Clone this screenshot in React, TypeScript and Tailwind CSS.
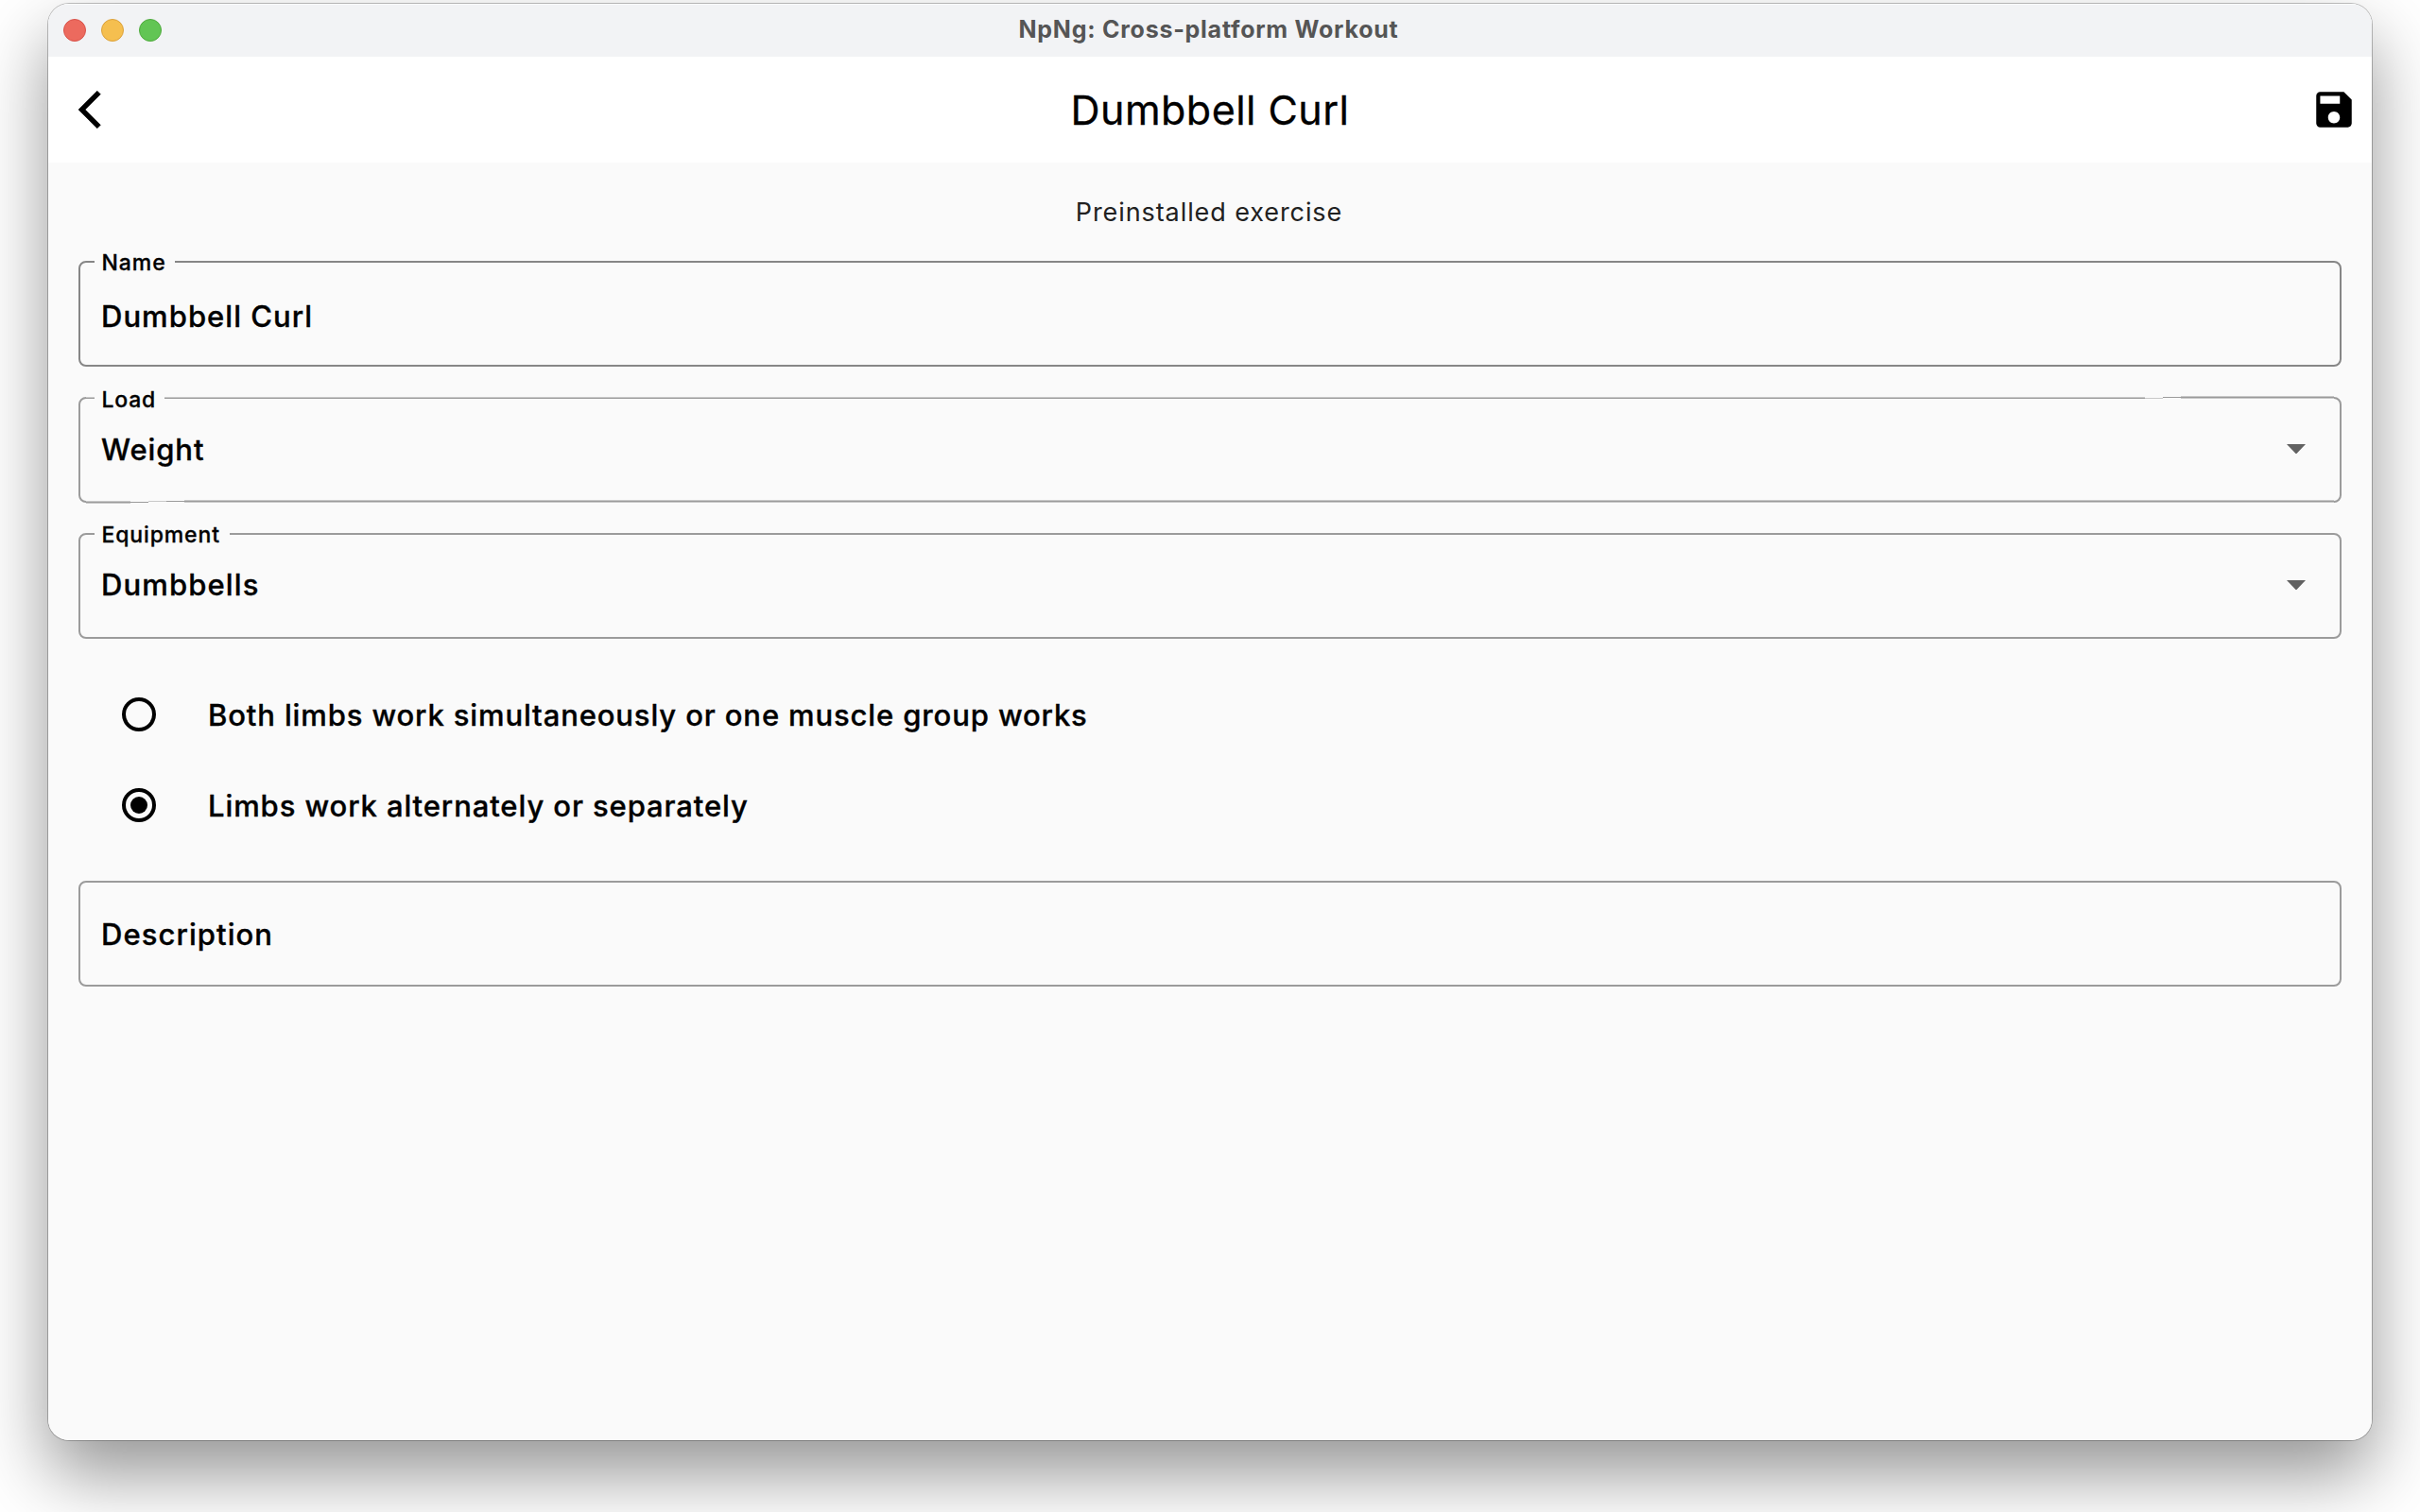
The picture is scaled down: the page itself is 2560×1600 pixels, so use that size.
import type { ReactNode } from "react";

function TrafficLights() {
  return (
    <div className="flex gap-4 pl-4 pt-4">
      <span className="size-6 rounded-full border border-[#d8524a] bg-[#ec6a5e]" />
      <span className="size-6 rounded-full border border-[#dba13c] bg-[#f5bf4f]" />
      <span className="size-6 rounded-full border border-[#4faa3d] bg-[#62c554]" />
    </div>
  );
}

function TitleBar() {
  return (
    <header className="grid h-14 grid-cols-[1fr_auto_1fr] bg-[#f2f3f5] shadow-[inset_0_1px_0_#fafbfb]">
      <TrafficLights />
      <h1 className="mr-[3px] pt-3 text-[25px] leading-[30px] font-bold tracking-[0.752px] text-[#555]">
        NpNg: Cross-platform Workout
      </h1>
    </header>
  );
}

function AppBar() {
  return (
    <nav className="grid h-28 grid-cols-[1fr_auto_1fr] bg-white text-black">
      <button className="flex items-center pl-8" aria-label="Back">
        <svg viewBox="0 0 24 24" className="size-12 overflow-visible" fill="currentColor" stroke="currentColor" strokeWidth="0.3">
          <path d="M11.67 3.87 9.9 2.1 0 12l9.9 9.9 1.77-1.77L3.54 12z" />
        </svg>
      </button>
      <h2 className="pt-[30px] text-[43px] leading-[52px] tracking-[0.461px] [-webkit-text-stroke:0.3px_black]">
        Dumbbell Curl
      </h2>
      <button className="flex items-center justify-end pr-[15px] pb-px" aria-label="Save">
        <svg viewBox="0 0 24 24" className="size-[50px]" fill="currentColor">
          <path d="M17 3H5a2 2 0 0 0-2 2v14a2 2 0 0 0 2 2h14c1.100 0 2-.9 2-2V7l-4-4zm-5 16c-1.660 0-3-1.340-3-3s1.340-3 3-3 3 1.340 3 3-1.340 3-3 3zm3-10H5V5h10v4z" />
        </svg>
      </button>
    </nav>
  );
}

function Legend({ className, children }: { className: string; children: ReactNode }) {
  return (
    <label
      className={`absolute left-[15px] z-10 bg-[#fafafa] pl-[7.500px] text-[23px] leading-[28px] font-medium whitespace-nowrap [-webkit-text-stroke:0.3px_black] ${className}`}
    >
      {children}
    </label>
  );
}

function Value({ className, children }: { className: string; children: ReactNode }) {
  return (
    <p className={`text-[31px] leading-[37px] font-medium whitespace-nowrap [-webkit-text-stroke:0.35px_black] ${className}`}>
      {children}
    </p>
  );
}

function Arrow() {
  return (
    <svg viewBox="0 0 20 10.5" className="mt-[47.5px] mr-9 h-[10.5px] w-5" fill="#616161">
      <path d="M0 0h20L10 10.5z" />
    </svg>
  );
}

/* Edge lines of the Load field: soft lines that step by half a pixel along the way. */
function LoadTopEdge() {
  return (
    <div className="absolute -top-[3px] right-1.5 left-1.5 flex h-[3px] bg-[#fafafa]">
      <div className="flex-1 border-b border-[#9b9b9b] pt-px">
        <div className="h-px bg-[#c8c8c8]" />
      </div>
      <div className="w-[19px] border-b border-[#c8c8c8]" />
      <div className="w-[19px] pt-px">
        <div className="h-px bg-[#9b9b9b]" />
      </div>
      <div className="w-[162px] border-y border-[#c8c8c8] bg-[#9b9b9b]" />
    </div>
  );
}

function LoadBottomEdge() {
  return (
    <div className="absolute right-1.5 -bottom-[3px] left-1.5 flex h-[4px] items-start bg-[#fafafa]">
      <div className="mt-px h-[3px] w-[47px] border-y border-[#c8c8c8] bg-[#9b9b9b]" />
      <div className="mt-0.5 h-px w-[19px] bg-[#9b9b9b]" />
      <div className="mt-px h-px w-[19px] bg-[#c8c8c8]" />
      <div className="mt-px h-px w-[19px] bg-[#9b9b9b]" />
      <div className="h-[3px] flex-1 border-y border-[#c8c8c8] bg-[#9b9b9b]" />
    </div>
  );
}

function Radio({ checked, children, className }: { checked?: boolean; children: ReactNode; className: string }) {
  return (
    <div className="flex h-24 items-center pl-[46px]">
      <span className="flex size-9 items-center justify-center rounded-full border-4 border-black">
        {checked && <span className="size-[18px] rounded-full bg-black" />}
      </span>
      <div className="ml-[55px] h-9">
        <Value className={className}>{children}</Value>
      </div>
    </div>
  );
}

export default function App() {
  return (
    <div className="h-[1600px] w-[2560px] overflow-hidden bg-white pt-1 font-['Inter',sans-serif]">
      <main className="mx-auto h-[1520px] w-[2458px] rounded-[22px] shadow-[0_0_0_1px_rgba(0,0,0,0.24),0_36px_76px_rgba(0,0,0,0.42)]">
        <div className="h-full overflow-hidden rounded-[22px] bg-[#fafafa] text-black">
          <TitleBar />
          <AppBar />
          <section className="px-8 pt-9">
            <p className="mr-[2px] text-center text-[27px] leading-[33px] tracking-[0.912px] text-[#212121]">
              Preinstalled exercise
            </p>

            <div className="relative mt-[35px] h-28 rounded-lg border-2 border-[#868686] pt-[38px] pl-[22px]">
              <Legend className="-top-[14px] w-[85px] tracking-[0.938px]">Name</Legend>
              <Value className="tracking-[1.04px]">Dumbbell Curl</Value>
            </div>

            <div className="relative mt-8 flex h-28 justify-between rounded-lg border-2 border-[#9b9b9b] pl-[22px]">
              <LoadTopEdge />
              <Legend className="-top-[13px] w-[74px] tracking-[0.772px]">Load</Legend>
              <Value className="pt-[35px] tracking-[0.9px]">Weight</Value>
              <Arrow />
              <LoadBottomEdge />
            </div>

            <div className="relative mt-8 flex h-28 justify-between rounded-lg border-2 border-[#9b9b9b] pl-[22px]">
              <Legend className="-top-[14px] w-[143px] tracking-[0.874px]">Equipment</Legend>
              <Value className="pt-[34px] tracking-[1.12px]">Dumbbells</Value>
              <Arrow />
            </div>

            <div className="mt-8">
              <Radio className="tracking-[0.872px]">Both limbs work simultaneously or one muscle group works</Radio>
              <Radio checked className="tracking-[0.903px]">
                Limbs work alternately or separately
              </Radio>
            </div>

            <div className="mt-8 h-28 rounded-lg border-2 border-[#9b9b9b] pt-9 pl-[22px]">
              <Value className="tracking-[1.07px]">Description</Value>
            </div>
          </section>
        </div>
      </main>
    </div>
  );
}
